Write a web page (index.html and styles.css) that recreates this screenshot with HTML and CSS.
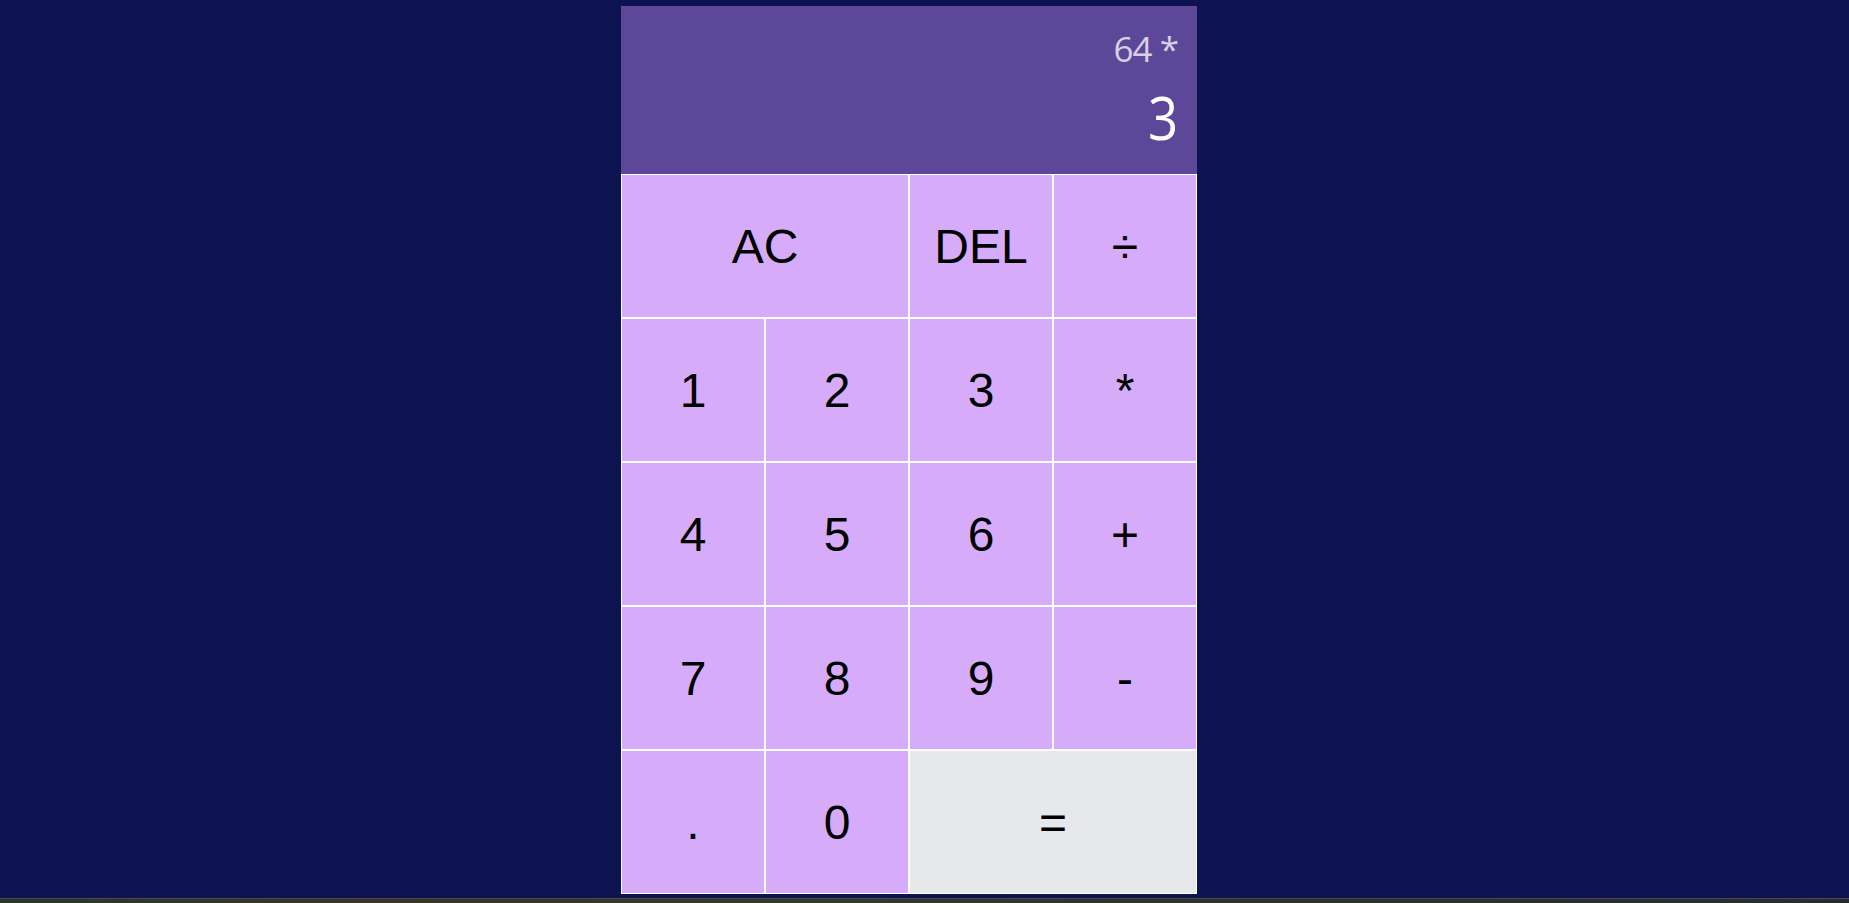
FILE: index.html
```html
<!DOCTYPE html>
<html lang="en">
<head>
<meta charset="utf-8">
<title>Calculator</title>
<link rel="stylesheet" href="styles.css">
</head>
<body>
<main class="stage">
  <div class="calculator">
    <div class="output">
      <div class="previous">64 *</div>
      <div class="current">3</div>
    </div>
    <button class="key span-two">AC</button>
    <button class="key">DEL</button>
    <button class="key">÷</button>
    <button class="key">1</button>
    <button class="key">2</button>
    <button class="key">3</button>
    <button class="key">*</button>
    <button class="key">4</button>
    <button class="key">5</button>
    <button class="key">6</button>
    <button class="key">+</button>
    <button class="key">7</button>
    <button class="key">8</button>
    <button class="key">9</button>
    <button class="key">-</button>
    <button class="key">.</button>
    <button class="key">0</button>
    <button class="key span-two equals">=</button>
  </div>
</main>
<div class="bottom-strip"></div>
</body>
</html>
```

FILE: styles.css
```css
*, *::before, *::after {
  box-sizing: border-box;
}

html, body {
  margin: 0;
  padding: 0;
  height: 100%;
  overflow: hidden;
}

body {
  background: #0c1350;
  display: flex;
  flex-direction: column;
}

.stage {
  flex: 1;
  display: flex;
  align-items: center;
  justify-content: center;
  padding: 2px 31px 0 0;
}

.calculator {
  display: grid;
  grid-template-columns: repeat(4, 144px);
  grid-template-rows: 168px repeat(5, 144px);
}

.output {
  grid-column: 1 / -1;
  background: #5c4799;
  display: flex;
  flex-direction: column;
  align-items: flex-end;
  justify-content: flex-start;
  gap: 10px;
  padding: 21px 19px 10px 10px;
  font-family: "Open Sans", "Noto Sans", sans-serif;
}

.previous {
  color: rgba(255, 255, 255, 0.75);
  font-size: 35px;
  line-height: 44px;
  letter-spacing: -1px;
}

.current {
  color: #ffffff;
  font-size: 60px;
  line-height: 72px;
  transform: scaleX(0.88);
  transform-origin: right center;
}

.key {
  font-family: "Liberation Sans", Arial, sans-serif;
  font-size: 48px;
  font-weight: normal;
  color: #000;
  background: #d6acfa;
  border: 1px solid #ffffff;
  padding: 0;
  margin: 0;
  cursor: pointer;
  outline: none;
}

.span-two {
  grid-column: span 2;
}

.equals {
  background: #e7e8ec;
}

.bottom-strip {
  height: 5px;
  flex: none;
  border-top: 1px solid #4a4a46;
  background: linear-gradient(to right, #27372a, #3a3226 20%, #33382a 45%, #2e2f2e 70%, #262a33);
}
```
